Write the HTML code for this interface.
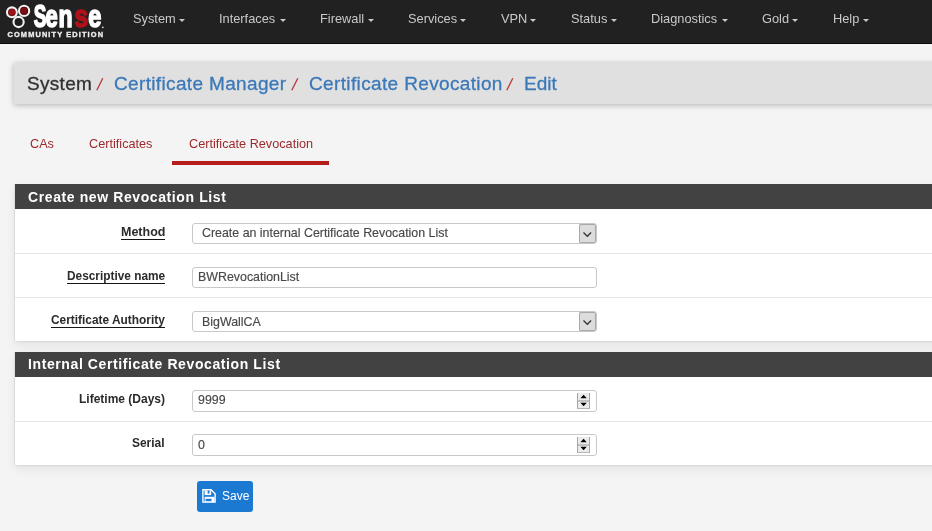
<!DOCTYPE html>
<html><head><meta charset="utf-8">
<style>
*{box-sizing:border-box;margin:0;padding:0}
html,body{width:932px;height:531px;overflow:hidden}
body{background:#f4f4f4;font-family:"Liberation Sans",sans-serif;position:relative}
.a,.ni,.bc,.tab,.lbl,.val,.pt,svg{will-change:transform}
.a{position:absolute;white-space:nowrap;line-height:1}
#nav{position:absolute;left:0;top:0;width:932px;height:44px;background:#212121;border-bottom:1px solid #0a0a0a}
.ni{position:absolute;top:13.4px;font-size:12.8px;color:#c9c9c9;line-height:1}
.caret{position:absolute;top:18.6px;width:0;height:0;border-left:3px solid transparent;border-right:3px solid transparent;border-top:3px solid #c9c9c9}
#hdr{position:absolute;left:14px;top:63px;width:940px;height:41px;background:#e0e0e0;box-shadow:0 1px 6px rgba(0,0,0,.28)}
.bc{position:absolute;top:74px;font-size:19px;letter-spacing:0.3px;line-height:1;-webkit-text-stroke:0.3px currentColor}
.bc.sl{font-size:16px;top:77px;letter-spacing:0}
.lnk{color:#3b78b8}
.sl{color:#b1252a}
.tab{position:absolute;top:138px;font-size:12.7px;color:#9c2a2c;line-height:1}
.panel{position:absolute;left:15px;width:930px;background:#fff;box-shadow:-1px 0 0 rgba(0,0,0,.06),0 1px 1px rgba(0,0,0,.05),0 4px 10px rgba(0,0,0,.08)}
.ph{position:absolute;left:0;top:0;width:100%;height:25px;background:#424242}
.pt{position:absolute;left:13px;top:5.6px;font-size:14px;font-weight:bold;letter-spacing:0.6px;color:#fff;line-height:1}
.sep{position:absolute;left:0;width:100%;height:1px;background:#e4e4e4}
.lbl{position:absolute;font-size:12px;font-weight:bold;color:#2b2b2b;line-height:1}
.u{border-bottom:1.4px solid #161616;padding-bottom:0.3px}
.inp{position:absolute;left:192px;width:405px;height:21px;border:1px solid #c8c8c8;border-radius:3px;background:#fff}
.val{position:absolute;font-size:12.4px;color:#484848;line-height:1;-webkit-text-stroke:0.15px currentColor}
.ddb{position:absolute;right:0;top:0;width:17px;height:19px;background:#dcdcdc;border:1px solid #a9a9a9;border-radius:1px 2px 2px 1px}
.ddb svg{position:absolute;left:1.5px;top:5.5px}
.spin{position:absolute;right:6px;top:2px;width:13px;height:16px;background:#ececec;border-left:1px solid #a6a6a6;border-right:1px solid #a6a6a6;border-bottom:1px solid #b5b5b5}
.spin:before{content:"";position:absolute;left:0;top:7px;width:11px;height:2px;background:#c2c2c2}
.spin svg{position:absolute;left:0;top:0}
</style></head><body>
<div id="nav">
  <svg style="position:absolute;left:0;top:0" width="110" height="44" viewBox="0 0 110 44">
    <circle cx="11.9" cy="12.3" r="4.9" fill="#5a0a0e" stroke="#f2f2f2" stroke-width="2.1"/>
    <circle cx="11.9" cy="12.3" r="3.3" fill="#9a131a"/>
    <circle cx="24.1" cy="10.9" r="5.1" fill="#4a080c" stroke="#f2f2f2" stroke-width="2.1"/>
    <circle cx="24.1" cy="10.9" r="3.4" fill="#7a0d13"/>
    <circle cx="18.6" cy="22" r="5.1" fill="#1e1e1e" stroke="#f2f2f2" stroke-width="2.1"/>
    <g font-family="Liberation Sans" font-weight="bold" stroke-linejoin="round">
      <text transform="translate(33.8,27) scale(0.74,1.23)" font-size="25.6" fill="#fff" stroke="#fff" stroke-width="1.4">S</text>
      <text transform="translate(45.4,27) scale(0.86,1.21)" font-size="25.6" fill="#fff" stroke="#fff" stroke-width="1.4">e</text>
      <text transform="translate(58.6,27) scale(0.9,1.21)" font-size="25.6" fill="#fff" stroke="#fff" stroke-width="1.4">n</text>
      <text transform="translate(74.6,27) scale(0.96,1.21)" font-size="25.6" fill="#b0111a" stroke="#b0111a" stroke-width="1.4">s</text>
      <text transform="translate(88.2,27) scale(0.92,1.21)" font-size="25.6" fill="#fff" stroke="#fff" stroke-width="1.4">e</text>
    </g>
    <circle cx="102.8" cy="27.3" r="0.9" fill="#ddd"/>
    <text x="7.5" y="37" font-family="Liberation Sans" font-weight="bold" font-size="7.4" fill="#eee" stroke="#eee" stroke-width="0.35" textLength="95.5" lengthAdjust="spacing">COMMUNITY EDITION</text>
  </svg>
  <div class="ni" style="left:133px">System</div><div class="caret" style="left:179px"></div>
  <div class="ni" style="left:218.5px">Interfaces</div><div class="caret" style="left:280px"></div>
  <div class="ni" style="left:319.5px">Firewall</div><div class="caret" style="left:368px"></div>
  <div class="ni" style="left:408.3px">Services</div><div class="caret" style="left:460px"></div>
  <div class="ni" style="left:500.5px">VPN</div><div class="caret" style="left:530px"></div>
  <div class="ni" style="left:570.5px">Status</div><div class="caret" style="left:611px"></div>
  <div class="ni" style="left:651.3px">Diagnostics</div><div class="caret" style="left:722px"></div>
  <div class="ni" style="left:761.5px">Gold</div><div class="caret" style="left:792px"></div>
  <div class="ni" style="left:832.5px">Help</div><div class="caret" style="left:863px"></div>
</div>

<div id="hdr"></div>
<div class="bc" style="left:27px;color:#303030">System</div>
<svg class="a" style="left:95.0px;top:76px" width="10" height="16"><line x1="1.8" y1="14.3" x2="7.8" y2="2.2" stroke="#b8383c" stroke-width="1.3"/></svg>
<div class="bc lnk" style="left:114px;letter-spacing:0.35px">Certificate Manager</div>
<svg class="a" style="left:290.0px;top:76px" width="10" height="16"><line x1="1.8" y1="14.3" x2="7.8" y2="2.2" stroke="#b8383c" stroke-width="1.3"/></svg>
<div class="bc lnk" style="left:309px;letter-spacing:0.36px">Certificate Revocation</div>
<svg class="a" style="left:505.0px;top:76px" width="10" height="16"><line x1="1.8" y1="14.3" x2="7.8" y2="2.2" stroke="#b8383c" stroke-width="1.3"/></svg>
<div class="bc lnk" style="left:524px;letter-spacing:0px">Edit</div>

<div class="tab" style="left:30px">CAs</div>
<div class="tab" style="left:89px">Certificates</div>
<div class="tab" style="left:189px">Certificate Revocation</div>
<div class="a" style="left:172px;top:161px;width:157px;height:4px;background:#b71c1c"></div>

<div class="panel" style="top:184px;height:157px">
  <div class="ph"><div class="pt">Create new Revocation List</div></div>
  <div class="sep" style="top:69px"></div>
  <div class="sep" style="top:113px"></div>
</div>
<div class="lbl u" style="right:767px;top:226px;font-size:12.5px">Method</div>
<div class="inp" style="top:223px;height:21px"><div class="ddb"><svg width="12" height="8"><polyline points="1.5,1.6 5.3,5.2 9.1,1.6" fill="none" stroke="#333" stroke-width="1.35"/></svg></div></div>
<div class="val" style="left:202px;top:227px">Create an internal Certificate Revocation List</div>

<div class="lbl u" style="right:767px;top:270.8px;font-size:11.85px">Descriptive name</div>
<div class="inp" style="top:267px;height:21px"></div>
<div class="val" style="left:198px;top:271px">BWRevocationList</div>

<div class="lbl u" style="right:767px;top:314.8px;font-size:11.9px">Certificate Authority</div>
<div class="inp" style="top:311px;height:21px"><div class="ddb"><svg width="12" height="8"><polyline points="1.5,1.6 5.3,5.2 9.1,1.6" fill="none" stroke="#333" stroke-width="1.35"/></svg></div></div>
<div class="val" style="left:202px;top:316px">BigWallCA</div>

<div class="panel" style="top:352px;height:113px">
  <div class="ph"><div class="pt" style="top:4.8px">Internal Certificate Revocation List</div></div>
  <div class="sep" style="top:69px"></div>
</div>
<div class="lbl" style="right:767px;top:393px;font-size:12px">Lifetime (Days)</div>
<div class="inp" style="top:390px;height:22px"><div class="spin"><svg width="12" height="16"><path d="M2.4 5.3 L5.6 1.8 L8.8 5.3 Z M2.4 9.8 L8.8 9.8 L5.6 13.3 Z" fill="#000"/></svg></div></div>
<div class="val" style="left:198px;top:394px">9999</div>
<div class="lbl" style="right:767px;top:437.6px;font-size:11.95px">Serial</div>
<div class="inp" style="top:434px;height:22px"><div class="spin"><svg width="12" height="16"><path d="M2.4 5.3 L5.6 1.8 L8.8 5.3 Z M2.4 9.8 L8.8 9.8 L5.6 13.3 Z" fill="#000"/></svg></div></div>
<div class="val" style="left:198px;top:439px">0</div>

<div class="a" style="left:197px;top:481px;width:56px;height:31px;background:#1b79d2;border-radius:3px"></div>
<svg class="a" style="left:200px;top:487px" width="18" height="18"><path d="M2.9 2.7 H11 L15.1 6.8 V15.1 H2.9 Z" fill="none" stroke="#fff" stroke-width="1.4" stroke-linejoin="miter"/><rect x="4.6" y="3.4" width="6.6" height="4.7" fill="#fff"/><rect x="7.6" y="3.4" width="1.9" height="3.2" fill="#1b79d2"/><rect x="4.6" y="9.8" width="9.8" height="5.3" fill="#fff"/><rect x="5.6" y="11.8" width="5.9" height="2.4" fill="#1b79d2"/></svg>
<div class="a" style="left:221.5px;top:490px;font-size:12px;color:#fff">Save</div>
</body></html>
